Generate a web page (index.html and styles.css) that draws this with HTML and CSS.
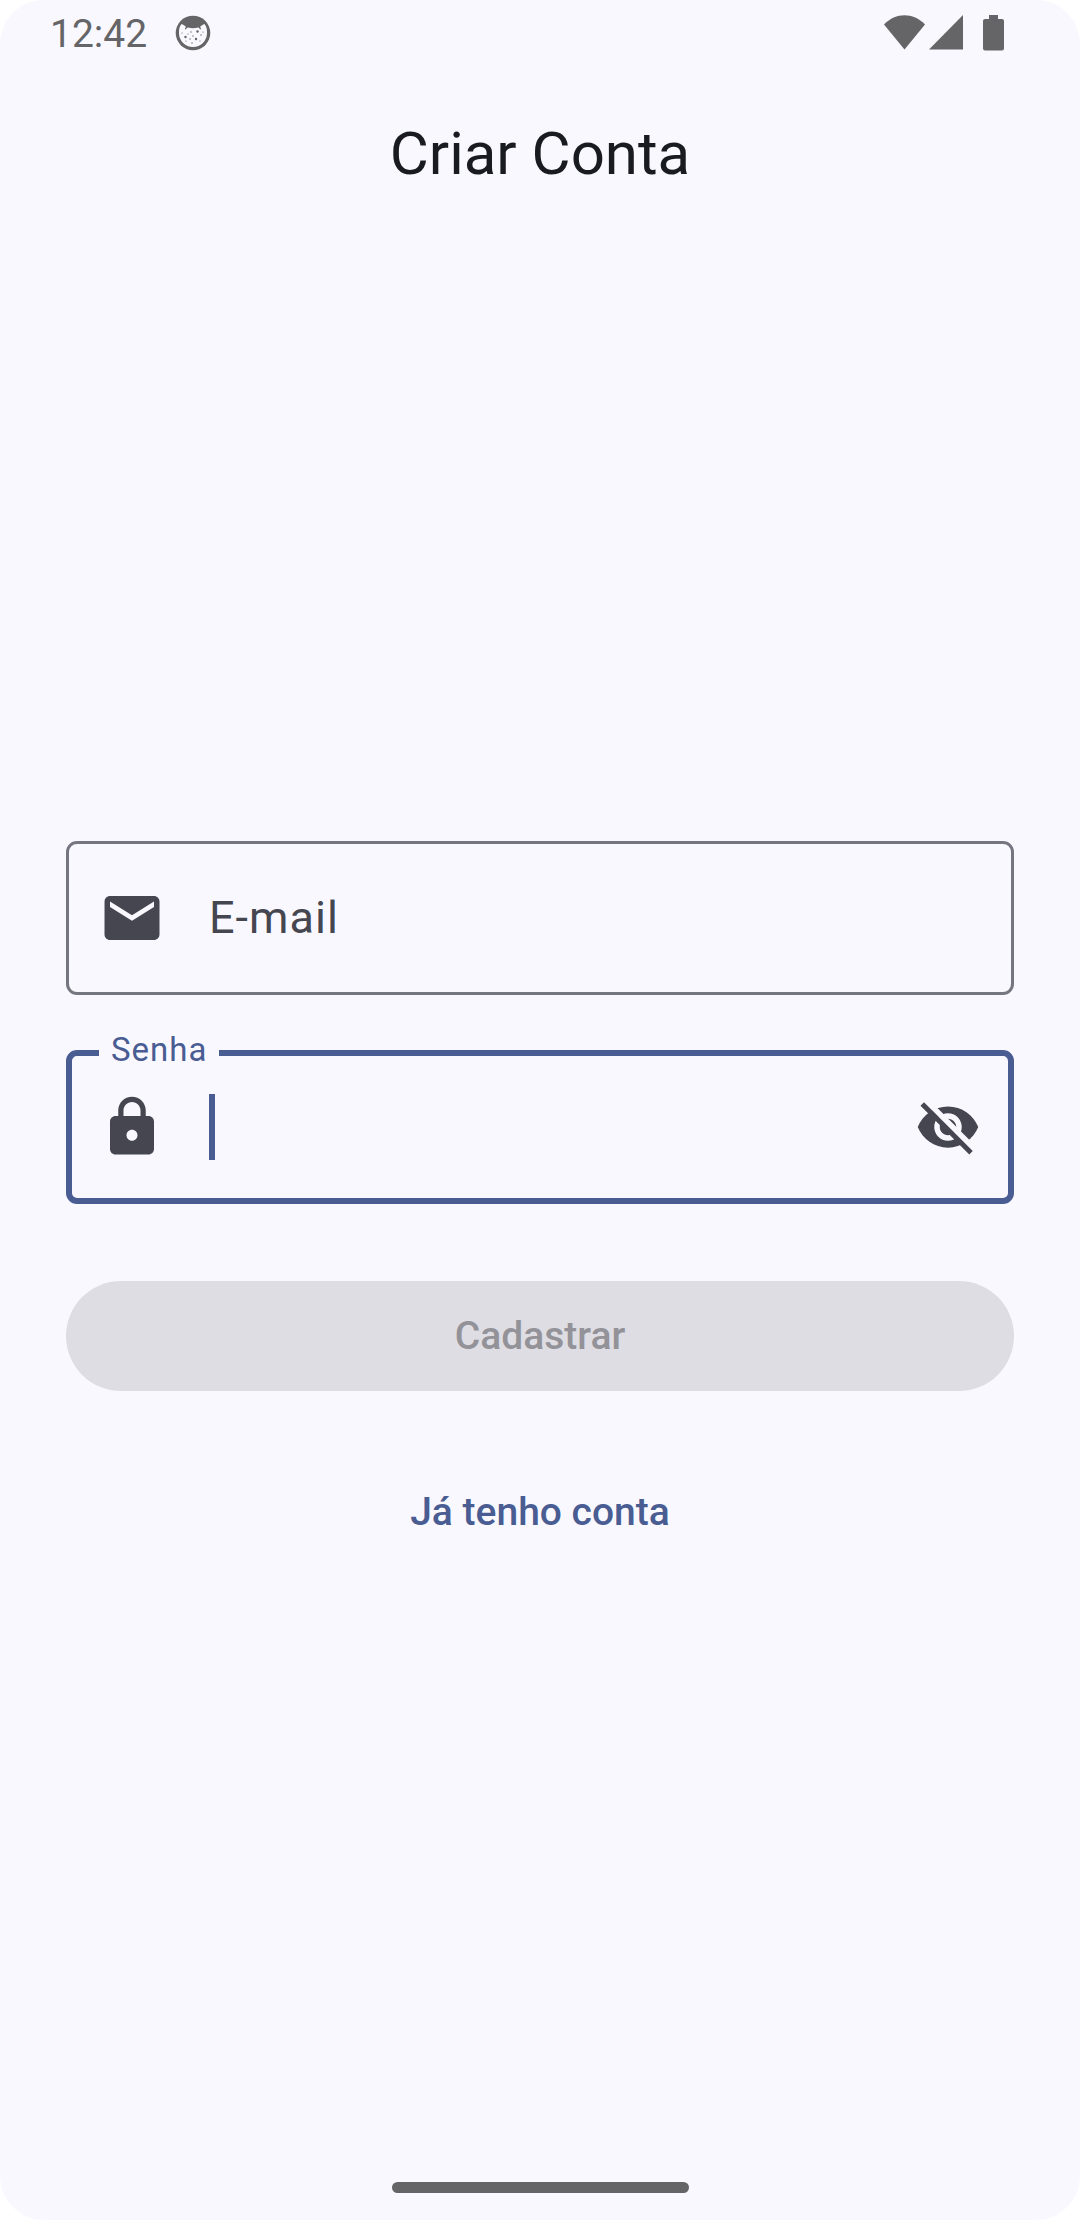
FILE: index.html
```html
<!DOCTYPE html>
<html lang="pt-BR">
<head>
<meta charset="utf-8">
<meta name="viewport" content="width=device-width, initial-scale=1">
<title>Criar Conta</title>
<link rel="stylesheet" href="styles.css">
</head>
<body>
<div class="screen">
  <div class="status-bar">
    <time class="clock">12:42</time>
    <svg class="notification" viewBox="0 0 36 36" aria-hidden="true">
      <circle cx="18" cy="18" r="17.3" fill="#656567"/>
      <path fill="#f9f8ff" d="M6.500 9C8 9.500 10 10.500 11 12C10 13 9.700 14 10.300 14.600C11.600 14.400 11.600 12.600 13 12.600C16 13.600 20 13.600 23 12.600C24.500 12.600 24.500 14.400 25.700 14.600C26.300 14 26 13 25 12C26 10.500 28 9.500 29.500 9C32 12 32 15 32 18A14 14 0 0 1 4 18C4 15 4 12 6.500 9Z"/>
      <g fill="#656567">
        <circle cx="22.500" cy="16.500" r="1.200"/><circle cx="10.500" cy="22" r="1.200"/><circle cx="21" cy="24" r="1.200"/>
        <circle cx="16" cy="17" r=".7"/><circle cx="7" cy="18" r=".6"/><circle cx="13" cy="19" r=".6"/><circle cx="18" cy="21" r=".7"/><circle cx="26" cy="20" r=".7"/><circle cx="15" cy="24" r=".7"/><circle cx="17" cy="28" r=".7"/><circle cx="28" cy="17" r=".6"/><circle cx="25" cy="26" r=".6"/><circle cx="11" cy="26" r=".6"/>
      </g>
    </svg>
    <div class="indicators">
      <svg class="wifi" viewBox="0 0 41 36" aria-hidden="true"><path d="M0 9.500C12-2.800 29-2.800 41 9.500L20.500 34.500Z"/></svg>
      <svg class="signal" viewBox="0 0 34 36" aria-hidden="true"><path d="M34 0V34.500H0Z"/></svg>
      <svg class="battery" viewBox="0 0 21 36" aria-hidden="true"><path d="M6 0H15V4H19Q21 4 21 6V33.500Q21 35.500 19 35.500H2Q0 35.500 0 33.500V6Q0 4 2 4H6Z"/></svg>
    </div>
  </div>

  <header class="app-bar"><h1 class="title">Criar Conta</h1></header>

  <main class="content">
    <form class="form">
      <div class="field">
        <svg class="icon" viewBox="0 0 24 24" aria-hidden="true"><path d="M20 4H4c-1.100 0-1.990.9-1.990 2L2 18c0 1.100.9 2 2 2h16c1.100 0 2-.9 2-2V6c0-1.100-.9-2-2-2zm0 4-8 5-8-5V6l8 5 8-5v2z"/></svg>
        <label class="placeholder" for="email">E-mail</label>
        <input class="input" id="email" type="email">
      </div>

      <div class="field field-focused">
        <label class="floating-label" for="password">Senha</label>
        <svg class="icon" viewBox="0 0 24 24" aria-hidden="true"><path d="M18 8h-1V6c0-2.760-2.240-5-5-5S7 3.240 7 6v2H6c-1.100 0-2 .9-2 2v10c0 1.100.9 2 2 2h12c1.100 0 2-.9 2-2V10c0-1.100-.9-2-2-2zm-6 9c-1.100 0-2-.9-2-2s.9-2 2-2 2 .9 2 2-.9 2-2 2zm3.100-9H8.900V6c0-1.710 1.390-3.100 3.100-3.100s3.100 1.390 3.100 3.100v2z"/></svg>
        <span class="caret"></span>
        <input class="input" id="password" type="password">
        <button class="toggle" type="button" aria-label="Mostrar senha">
          <svg class="icon" viewBox="0 0 24 24" aria-hidden="true">
            <path d="M12 4.500C7 4.500 2.730 7.610 1 12c1.730 4.390 6 7.500 11 7.500s9.270-3.110 11-7.500c-1.730-4.390-6-7.500-11-7.500zM12 17c-2.760 0-5-2.240-5-5s2.240-5 5-5 5 2.240 5 5-2.240 5-5 5zm0-8c-1.660 0-3 1.340-3 3s1.340 3 3 3 3-1.340 3-3-1.340-3-3-3z"/>
            <path fill="#f9f8ff" d="M3.270 3L4.700 1.600L22.200 19.100L20.730 20.730Z"/>
            <path d="M2 4.270L19.730 22L21 20.730L3.270 3Z"/>
          </svg>
        </button>
      </div>

      <button class="submit" type="submit" disabled>Cadastrar</button>
      <button class="link-button" type="button">Já tenho conta</button>
    </form>
  </main>

  <div class="nav-bar"><span class="handle"></span></div>
</div>
</body>
</html>
```
FILE: styles.css
```css
* {
  box-sizing: border-box;
}

body {
  margin: 0;
  background: #fff;
  font-family: Roboto, sans-serif;
  color: #1a1b21;
}

.screen {
  display: flex;
  flex-direction: column;
  min-height: 100vh;
  border-radius: 44px;
  background: #f9f8ff;
}

.status-bar {
  display: flex;
  align-items: center;
  height: 66px;
  padding: 0 76px 0 50px;
  color: #656567;
}

.clock {
  padding-top: 2px;
  font-size: 39px;
  line-height: 66px;
}

.notification {
  width: 36px;
  height: 36px;
  margin-left: 28px;
}

.indicators {
  display: flex;
  margin-left: auto;
  fill: #656567;
}

.wifi {
  width: 41px;
  height: 36px;
}

.signal {
  width: 34px;
  height: 36px;
  margin: 0 20px 0 4px;
}

.battery {
  width: 21px;
  height: 36px;
}

.app-bar {
  display: flex;
  align-items: center;
  justify-content: center;
  height: 176px;
}

.title {
  margin: 0;
  font-size: 60px;
  font-weight: 400;
  line-height: 76px;
}

.content {
  display: flex;
  flex: 1;
  flex-direction: column;
  justify-content: center;
  padding: 12px 66px 0;
}

.form {
  display: flex;
  flex-direction: column;
}

.field {
  position: relative;
  display: flex;
  align-items: center;
  height: 154px;
  padding: 0 30px;
  border: 3px solid #757680;
  border-radius: 11px;
  color: #45464f;
}

.field-focused {
  margin-top: 55px;
  padding: 0 27px;
  border: 6px solid #495d92;
}

.icon {
  display: block;
  flex: none;
  width: 66px;
  height: 66px;
  fill: #45464f;
}

.placeholder {
  margin-left: 44px;
  font-size: 45px;
  line-height: 66px;
  letter-spacing: 1px;
}

.floating-label {
  position: absolute;
  top: -28px;
  left: 27px;
  padding: 0 12px;
  background: #f9f8ff;
  color: #495d92;
  font-size: 33px;
  line-height: 44px;
  letter-spacing: 1px;
}

.input {
  flex: 1;
  min-width: 0;
  height: 66px;
  padding: 0;
  border: 0;
  outline: 0;
  background: transparent;
  color: #1a1b21;
  font: inherit;
  font-size: 45px;
}

.caret {
  width: 6px;
  height: 66px;
  margin-left: 44px;
  background: #495d92;
}

.toggle {
  padding: 0;
  border: 0;
  background: none;
}

.submit,
.link-button {
  height: 110px;
  border: 0;
  border-radius: 55px;
  font-family: inherit;
  font-size: 39px;
  font-weight: 500;
  line-height: 55px;
}

.submit {
  margin-top: 77px;
  background: #dedde3;
  color: #939299;
}

.link-button {
  align-self: center;
  margin-top: 66px;
  padding: 0 33px;
  background: none;
  color: #495d92;
}

.nav-bar {
  display: flex;
  align-items: center;
  justify-content: center;
  height: 66px;
}

.handle {
  width: 297px;
  height: 11px;
  border-radius: 6px;
  background: #656567;
}
```
